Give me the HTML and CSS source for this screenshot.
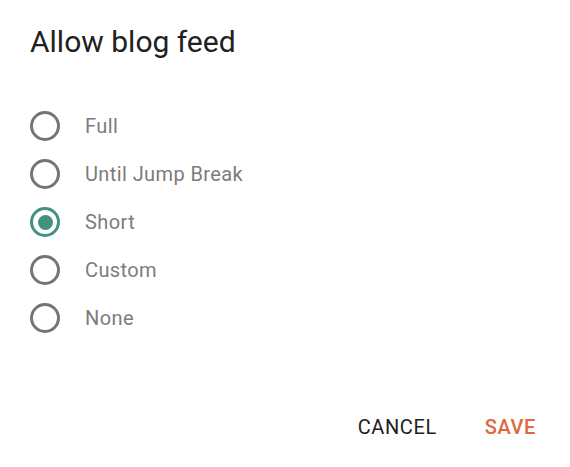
FILE: index.html
```html
<!DOCTYPE html>
<html>
<head>
<meta charset="utf-8">
<link rel="stylesheet" href="styles.css">
</head>
<body>
<div class="dialog">
  <h1 class="title">Allow blog feed</h1>
  <div class="options">
    <label class="option"><span class="radio"></span><span class="label">Full</span></label>
    <label class="option"><span class="radio"></span><span class="label">Until Jump Break</span></label>
    <label class="option"><span class="radio checked"></span><span class="label">Short</span></label>
    <label class="option"><span class="radio"></span><span class="label">Custom</span></label>
    <label class="option"><span class="radio"></span><span class="label">None</span></label>
  </div>
  <div class="actions">
    <button class="btn cancel">CANCEL</button>
    <button class="btn save">SAVE</button>
  </div>
</div>
</body>
</html>
```
FILE: styles.css
```css
html, body {
  margin: 0;
  padding: 0;
  background: #fff;
}
body {
  font-family: Roboto, "Liberation Sans", sans-serif;
  width: 570px;
  height: 467px;
  overflow: hidden;
}
.dialog {
  display: flex;
  flex-direction: column;
  height: 467px;
  box-sizing: border-box;
  padding: 22px 0 0 0;
}
.title {
  margin: 0 0 0 30px;
  font-size: 30px;
  font-weight: 400;
  color: #212121;
  line-height: 40px;
}
.options {
  margin-top: 40px;
  display: flex;
  flex-direction: column;
}
.option {
  display: flex;
  align-items: center;
  height: 48px;
  padding-left: 30px;
}
.radio {
  width: 30px;
  height: 30px;
  box-sizing: border-box;
  border: 3px solid #757575;
  border-radius: 50%;
  display: flex;
  align-items: center;
  justify-content: center;
}
.radio.checked {
  border-color: #43917f;
}
.radio.checked::after {
  content: "";
  width: 15px;
  height: 15px;
  border-radius: 50%;
  background: #43917f;
}
.label {
  margin-left: 25px;
  font-size: 20px;
  letter-spacing: 0.4px;
  color: #7c7c7c;
}
.actions {
  margin-top: auto;
  margin-bottom: 18px;
  display: flex;
  justify-content: flex-end;
  padding-right: 22px;
  gap: 24px;
}
.btn {
  background: none;
  border: none;
  font-family: Roboto, "Liberation Sans", sans-serif;
  font-size: 20px;
  letter-spacing: 0.6px;
  padding: 8px 12px;
  line-height: 28px;
  cursor: pointer;
}
.cancel { color: #212121; font-weight: 400; }
.save { color: #e0683c; font-weight: 500; }
```
